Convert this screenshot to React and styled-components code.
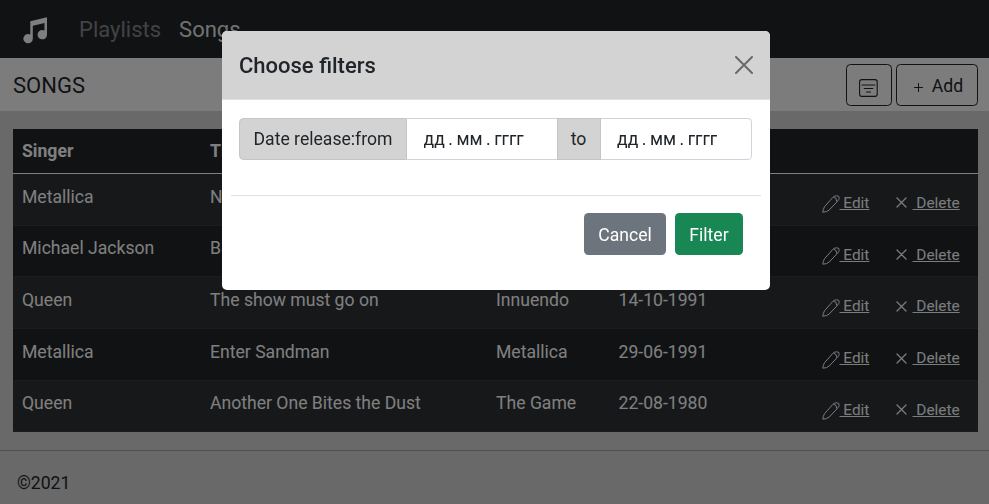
import React from "react";
import styled, { createGlobalStyle } from "styled-components";

const GlobalStyle = createGlobalStyle`
  *, *::before, *::after { box-sizing: border-box; }
  html, body { margin: 0; height: 504px; overflow: hidden; }
  body {
    background: #d3d3d3;
    color: #212529;
    font-family: Roboto, "Liberation Sans", sans-serif;
    font-size: 17.6px;
    line-height: 26px;
  }
  button, input { font: inherit; }
`;

const Page = styled.div`
  display: flex;
  flex-direction: column;
  height: 504px;
`;

const Navbar = styled.nav`
  display: flex;
  align-items: center;
  height: 58px;
  flex: none;
  padding: 2px 0 0 23px;
  background: #212529;
`;

const Brand = styled.a`
  display: flex;
  width: 56px;
  color: #fff;
`;

const NavLink = styled.a`
  margin-right: 18px;
  font-size: 22px;
  line-height: 30px;
  color: ${(p) => (p.$active ? "rgba(255,255,255,.9)" : "rgba(255,255,255,.45)")};
`;

const Toolbar = styled.header`
  display: flex;
  align-items: center;
  height: 53px;
  flex: none;
  padding: 0 11px 0 13px;
  background: #f8f9fa;
`;

const PageTitle = styled.h1`
  margin: 0 auto 0 0;
  font-size: 22px;
  line-height: 30px;
  font-weight: 400;
  padding-top: 3px;
`;

const ToolButton = styled.button`
  display: flex;
  align-items: center;
  justify-content: center;
  width: ${(p) => p.$width}px;
  height: 42px;
  margin-left: 4px;
  padding: 2px 0 0 ${(p) => p.$shift || 0}px;
  gap: 9px;
  background: transparent;
  border: 1px solid #212529;
  border-radius: 4.5px;
  color: #212529;
  svg { margin-top: 4px; }
`;

const FilterToggle = styled(ToolButton)`
  padding-right: 2px;
`;

const Main = styled.main`
  flex: none;
  padding: 18px 11px 18px 13px;
`;

const Table = styled.div`
  display: flex;
  flex-direction: column;
  color: #fff;
  background: #212529;
`;

const Row = styled.div`
  display: grid;
  grid-template-columns: 188px 286px 122.5px 1fr 156.5px;
  height: 51.7px;
  padding-top: 9.7px;
  padding-left: 9px;
  background: ${(p) => (p.$striped ? "#2c3034" : "#212529")};
  border-bottom: 1px solid #373b3e;
`;

const HeadRow = styled(Row)`
  height: 45px;
  padding-top: 9.4px;
  font-weight: 700;
  border-bottom: 1px solid #fff;
`;

const Actions = styled.div`
  display: flex;
  align-items: center;
  height: 26px;
  margin-top: 6.3px;
`;

const ActionLink = styled.a`
  display: flex;
  align-items: center;
  width: ${(p) => p.$width}px;
  font-size: 15.4px;
  line-height: 20px;
  color: #f8f9fa;
  svg { flex: none; }
  span { white-space: pre; text-decoration: underline; }
`;

const EditLink = styled(ActionLink)`
  svg { margin-top: 3px; }
`;

const DeleteLink = styled(ActionLink)`
  span { margin-left: 5.5px; }
`;

const Footer = styled.footer`
  flex: 1;
  padding: 18.5px 17px;
  border-top: 1px solid #a0a0a0;
`;

const Backdrop = styled.div`
  position: fixed;
  inset: 0;
  display: flex;
  justify-content: center;
  align-items: flex-start;
  padding: 31px 0 0 3px;
  background: rgba(0, 0, 0, 0.5);
`;

const Dialog = styled.section`
  width: 548px;
  height: 259.4px;
  overflow: hidden;
  background: #fff;
  border-radius: 5px;
`;

const DialogHeader = styled.header`
  display: flex;
  align-items: center;
  justify-content: space-between;
  height: 69px;
  padding: 0 17.5px 0 17px;
  background: #d3d3d3;
  border-bottom: 1px solid #dee2e6;
`;

const DialogTitle = styled.h2`
  margin: 0;
  padding-top: 2px;
  font-size: 22px;
  line-height: 32px;
  font-weight: 500;
`;

const CloseButton = styled.button`
  display: flex;
  padding: 0;
  border: 0;
  background: none;
  color: #000;
  opacity: 0.5;
`;

const InputGroup = styled.div`
  display: flex;
  height: 42px;
  margin: 18px 18px 0 17px;
`;

const Addon = styled.label`
  display: flex;
  align-items: center;
  justify-content: center;
  width: ${(p) => p.$width}px;
  flex: none;
  background: #d3d3d3;
  border: 1px solid #c3c5c8;
  border-radius: ${(p) => (p.$first ? "4.5px 0 0 4.5px" : "0")};
`;

const DateInput = styled.input`
  width: ${(p) => p.$width}px;
  min-width: 0;
  padding: 0 0 0 16.5px;
  border: 1px solid #ced4da;
  border-left: 0;
  border-right-width: ${(p) => (p.$last ? "1px" : "0")};
  border-radius: ${(p) => (p.$last ? "0 4.5px 4.5px 0" : "0")};
  outline: 0;
  background: #fff;
  color: #212529;
  word-spacing: -0.9px;
`;

const DialogFooter = styled.footer`
  display: flex;
  justify-content: flex-end;
  gap: 9px;
  margin: 35px 9px 0;
  padding: 17.4px 18px 0 0;
  border-top: 1px solid #dee2e6;
`;

const DialogButton = styled.button`
  height: 42px;
  width: ${(p) => p.$width}px;
  padding: 1px 0 0;
  border: 0;
  border-radius: 4.5px;
  color: #fff;
  background: ${(p) => p.$color};
`;

const NoteIcon = () => (
  <svg width="25" height="27" viewBox="0 0 25 27" fill="currentColor">
    <path d="M7.3 4.3 24 .2v17.3a4.7 4.7 0 1 1-2.5-4V5.9L9.8 8.8v12.8a4.7 4.7 0 1 1-2.5-4.1Z" />
  </svg>
);

const FilterIcon = () => (
  <svg width="19" height="18" viewBox="0 0 19 18" fill="none" stroke="currentColor">
    <rect x=".6" y=".6" width="17.6" height="16.8" rx="2.2" strokeWidth="1.1" />
    <path d="M3 6h13M5.2 9.5h8.6M7.5 13h4" strokeWidth="1.2" strokeLinecap="round" />
  </svg>
);

const PlusIcon = () => (
  <svg width="9" height="9" viewBox="0 0 9 9" stroke="currentColor" strokeLinecap="round">
    <path d="M4.5.5v8M.5 4.5h8" />
  </svg>
);

const PencilIcon = () => (
  <svg width="18" height="18" viewBox="0 0 18 18" fill="none" stroke="currentColor" strokeLinejoin="round">
    <path d="M.8 17.2Q1 14.2 2.6 11.6L10.8 2.4Q12.4.8 14.6.8 17.6.8 17.2 3.2 17 4.6 15.6 6.2L7.2 15Q4.8 17.2.8 17.2ZM11.6 2.2Q14.6 2.4 14.8 6.6" />
  </svg>
);

const CrossIcon = () => (
  <svg width="11" height="11" viewBox="0 0 11 11" stroke="currentColor" strokeLinecap="round">
    <path d="m1 1 9 9M10 1l-9 9" strokeWidth="1.3" />
  </svg>
);

const CloseIcon = () => (
  <svg width="18" height="18" viewBox="0 0 18 18" stroke="currentColor" strokeLinecap="round">
    <path d="m1 1 16 16M17 1 1 17" strokeWidth="2" />
  </svg>
);

const songs = [
  ["Metallica", "Nothing", "", ""],
  ["Michael Jackson", "Bad", "", ""],
  ["Queen", "The show must go on", "Innuendo", "14-10-1991"],
  ["Metallica", "Enter Sandman", "Metallica", "29-06-1991"],
  ["Queen", "Another One Bites the Dust", "The Game", "22-08-1980"],
];

export default function App() {
  return (
    <>
      <GlobalStyle />
      <Page>
        <Navbar>
          <Brand><NoteIcon /></Brand>
          <NavLink>Playlists</NavLink>
          <NavLink $active>Songs</NavLink>
        </Navbar>
        <Toolbar>
          <PageTitle>SONGS</PageTitle>
          <FilterToggle $width={46}><FilterIcon /></FilterToggle>
          <ToolButton $width={82} $shift={3}><PlusIcon />Add</ToolButton>
        </Toolbar>
        <Main>
          <Table>
            <HeadRow>
              <span>Singer</span><span>Title</span>
            </HeadRow>
            {songs.map((song, i) => (
              <Row key={i} $striped={i % 2 === 0}>
                {song.map((cell, j) => <span key={j}>{cell}</span>)}
                <Actions>
                  <EditLink $width={74.5}><PencilIcon /><span> Edit</span></EditLink>
                  <DeleteLink $width={70}><CrossIcon /><span> Delete</span></DeleteLink>
                </Actions>
              </Row>
            ))}
          </Table>
        </Main>
        <Footer>©2021</Footer>
      </Page>
      <Backdrop>
        <Dialog role="dialog" aria-label="Choose filters">
          <DialogHeader>
            <DialogTitle>Choose filters</DialogTitle>
            <CloseButton aria-label="Close"><CloseIcon /></CloseButton>
          </DialogHeader>
          <InputGroup>
            <Addon $first $width={168}>Date release:from</Addon>
            <DateInput $width={149.5} defaultValue="дд . мм . гггг" />
            <Addon $width={44}>to</Addon>
            <DateInput $last $width={151.5} defaultValue="дд . мм . гггг" />
          </InputGroup>
          <DialogFooter>
            <DialogButton $width={82} $color="#6c757d">Cancel</DialogButton>
            <DialogButton $width={68} $color="#198754">Filter</DialogButton>
          </DialogFooter>
        </Dialog>
      </Backdrop>
    </>
  );
}
